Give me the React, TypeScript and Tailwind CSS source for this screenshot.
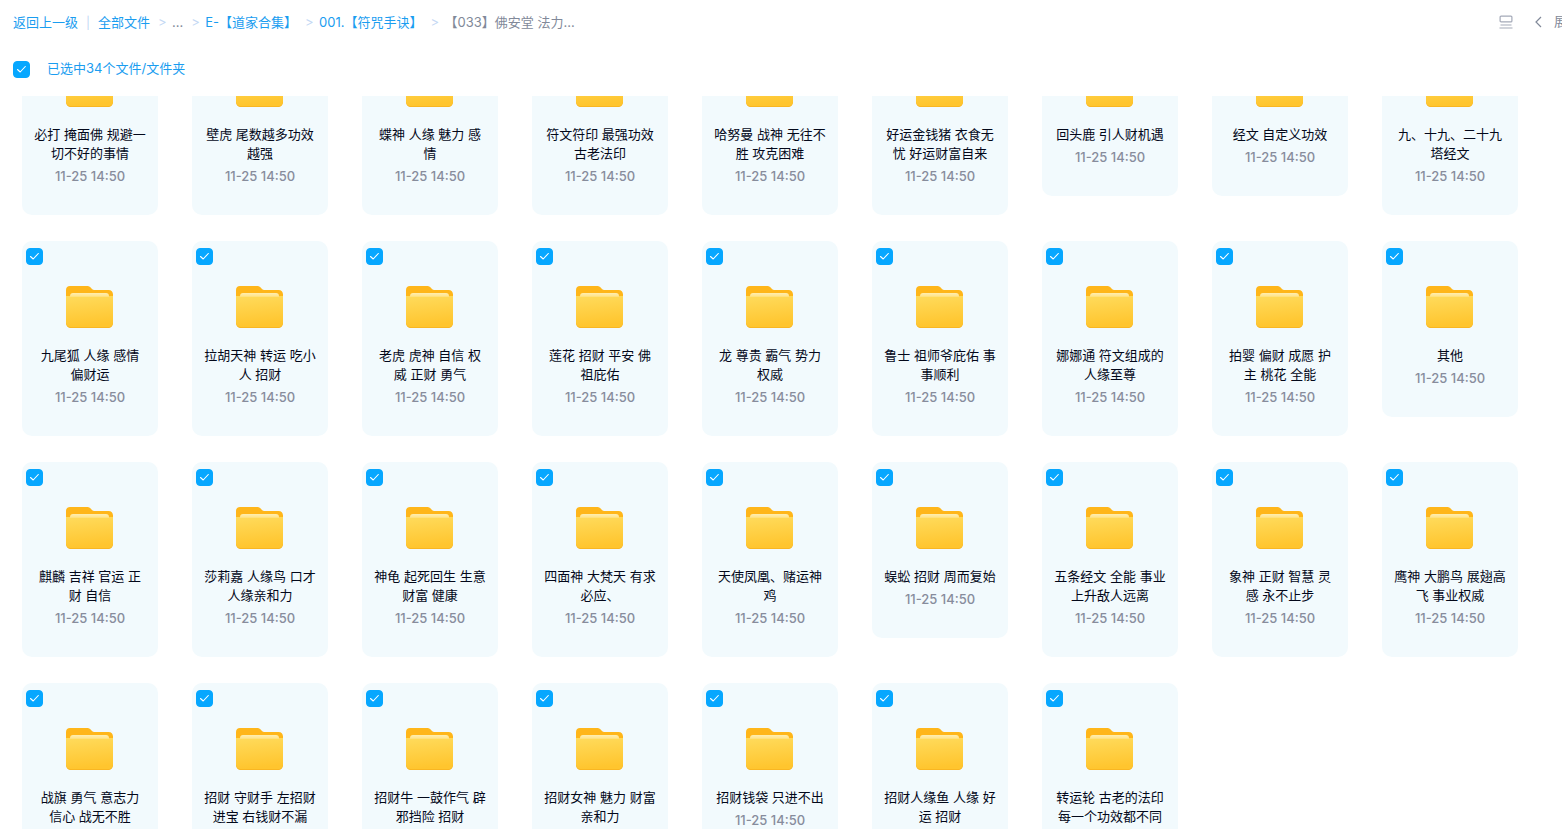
import React, { useLayoutEffect, useRef, useState } from 'react';

interface FolderItem {
    id: number;
    name: string;
    modifiedAt: string;
}

const folderNames = [
    '必打 掩面佛 规避一切不好的事情',
    '壁虎 尾数越多功效越强',
    '蝶神 人缘 魅力 感情',
    '符文符印 最强功效 古老法印',
    '哈努曼 战神 无往不胜 攻克困难',
    '好运金钱猪 衣食无忧 好运财富自来',
    '回头鹿 引人财机遇',
    '经文 自定义功效',
    '九、十九、二十九塔经文',
    '九尾狐 人缘 感情 偏财运',
    '拉胡天神 转运 吃小人 招财',
    '老虎 虎神 自信 权威 正财 勇气',
    '莲花 招财 平安 佛祖庇佑',
    '龙 尊贵 霸气 势力 权威',
    '鲁士 祖师爷庇佑 事事顺利',
    '娜娜通 符文组成的人缘至尊',
    '拍婴 偏财 成愿 护主 桃花 全能',
    '其他',
    '麒麟 吉祥 官运 正财 自信',
    '莎莉嘉 人缘鸟 口才 人缘亲和力',
    '神龟 起死回生 生意财富 健康',
    '四面神 大梵天 有求必应、',
    '天使凤凰、赌运神鸡',
    '蜈蚣 招财 周而复始',
    '五条经文 全能 事业上升敌人远离',
    '象神 正财 智慧 灵感 永不止步',
    '鹰神 大鹏鸟 展翅高飞 事业权威',
    '战旗 勇气 意志力 信心 战无不胜',
    '招财 守财手 左招财进宝 右钱财不漏',
    '招财牛 一鼓作气 辟邪挡险 招财',
    '招财女神 魅力 财富 亲和力',
    '招财钱袋 只进不出',
    '招财人缘鱼 人缘 好运 招财',
    '转运轮 古老的法印 每一个功效都不同',
];

const folders: FolderItem[] = folderNames.map((name, index) => ({
    id: index + 1,
    name,
    modifiedAt: '11-25 14:50',
}));

const INITIAL_SCROLL = 76;

const FolderGradients = () => (
    <svg width="0" height="0" className="absolute" aria-hidden="true">
        <defs>
            <linearGradient id="folder-front" x1="0" y1="0" x2="0.15" y2="1">
                <stop offset="0" stopColor="#ffdb5c" />
                <stop offset="1" stopColor="#ffc52e" />
            </linearGradient>
            <linearGradient id="folder-sheet" x1="0" y1="0" x2="0" y2="1">
                <stop offset="0" stopColor="#ffeeb0" />
                <stop offset="1" stopColor="#ffdf7a" />
            </linearGradient>
        </defs>
    </svg>
);

const FolderIcon = () => (
    <svg width="48" height="42" viewBox="0 0 48 42" aria-hidden="true">
        <path
            d="M0 4C0 1.6 1.6 0 4 0H21C22.6 0 23.6.5 24.6 1.5L26 2.9C26.8 3.7 27.6 4 28.8 4H42.5C45.4 4 47 5.8 47 8.5V38H0Z"
            fill="#ffb61a"
        />
        <path d="M4 12V10C4 8.3 5.2 7 7 7H40C41.8 7 43 8.3 43 10V12Z" fill="url(#folder-sheet)" />
        <path d="M0 10H47V37C47 40 45 42 42 42H5C2 42 0 40 0 37Z" fill="#f9b622" />
        <path d="M0 10H47V36C47 39 45 41 42 41H5C2 41 0 39 0 36Z" fill="url(#folder-front)" />
        <path d="M4 10H43V11H4Z" fill="#ffe79a" opacity="0.6" />
    </svg>
);

interface CheckboxProps {
    checked: boolean;
    onChange: () => void;
    label: string;
}

const Checkbox: React.FC<CheckboxProps> = ({ checked, onChange, label }) => (
    <span className="relative block w-[17px] h-[17px] shrink-0">
        <input
            type="checkbox"
            aria-label={label}
            checked={checked}
            onChange={onChange}
            className="block w-full h-full appearance-none rounded border border-[#d4d7de] bg-white checked:border-[#06a7ff] checked:bg-[#06a7ff] cursor-pointer"
        />
        {checked && (
            <svg className="absolute inset-0 pointer-events-none" width="17" height="17" viewBox="0 0 17 17" fill="none">
                <path d="M4.5 8.5L7.2 11L12.3 5.5" stroke="#fff" strokeWidth="1.1" strokeLinecap="round" strokeLinejoin="round" />
            </svg>
        )}
    </span>
);

const Separator = () => <span className="ml-2 mr-1.5 w-2 text-center text-[#c4d8f4]">&gt;</span>;

interface FolderCardProps {
    folder: FolderItem;
    selected: boolean;
    onToggle: (id: number) => void;
}

const FolderCard: React.FC<FolderCardProps> = ({ folder, selected, onToggle }) => (
    <li className={`relative flex flex-col items-center rounded-[10px] px-3 pt-[45px] pb-[29px] ${selected ? 'bg-[#f2fafd]' : 'bg-white'}`}>
        <div className="absolute left-1 top-[7px]">
            <Checkbox checked={selected} onChange={() => onToggle(folder.id)} label={folder.name} />
        </div>
        <FolderIcon />
        <a href="#" className="mt-[18px] w-full text-center leading-[19px] text-[#03081a]">
            {folder.name}
        </a>
        <span className="mt-[3px] font-medium leading-5 text-[#878c9c]">{folder.modifiedAt}</span>
    </li>
);

const App = () => {
    const [selected, setSelected] = useState<number[]>(folders.map((folder) => folder.id));
    const listRef = useRef<HTMLDivElement>(null);

    useLayoutEffect(() => {
        if (listRef.current) {
            listRef.current.scrollTop = INITIAL_SCROLL;
        }
    }, []);

    const handleToggle = (id: number) => {
        setSelected((prev) => (prev.includes(id) ? prev.filter((item) => item !== id) : [...prev, id]));
    };

    const allSelected = selected.length === folders.length;

    const handleToggleAll = () => {
        setSelected(allSelected ? [] : folders.map((folder) => folder.id));
    };

    return (
        <div className="flex h-screen flex-col overflow-hidden bg-white text-[13px] font-[Inter,'Noto_Sans_CJK_SC',sans-serif]">
            <FolderGradients />

            {/* Breadcrumb */}
            <header className="flex h-11 shrink-0 items-center justify-between overflow-hidden whitespace-nowrap pl-[13px]">
                <nav className="flex items-center pt-0.5 text-[#1a9df0]">
                    <a href="#">返回上一级</a>
                    <span className="mx-2 w-1 text-center text-xs text-[#c4d8f4]">|</span>
                    <a href="#">全部文件</a>
                    <Separator />
                    <span className="text-[#818999]">...</span>
                    <Separator />
                    <a href="#">E-【道家合集】</a>
                    <Separator />
                    <a href="#">001.【符咒手诀】</a>
                    <Separator />
                    <span className="text-[#818999]">【033】佛安堂 法力...</span>
                </nav>
                <div className="-mr-[18px] flex items-center text-[#818999]">
                    <button type="button" aria-label="切换视图" className="mr-[22px]">
                        <svg width="14" height="14" viewBox="0 0 14 14" fill="none" stroke="#a4a9b8" strokeWidth="1.2">
                            <rect x="1.1" y="1.1" width="11.8" height="5.8" rx="1" />
                            <path d="M1.5 10H12.5M.5 13H13.5" />
                        </svg>
                    </button>
                    <button type="button" className="flex items-center gap-3">
                        <svg width="7" height="12" viewBox="0 0 7 12" fill="none" stroke="#818999" strokeWidth="1.2">
                            <path d="M6 1L1 6L6 11" />
                        </svg>
                        展开
                    </button>
                </div>
            </header>

            {/* Selection bar */}
            <div className="flex h-[52px] shrink-0 items-center gap-[17px] pb-0.5 pl-[13px] text-[#1a9df0]">
                <Checkbox checked={allSelected} onChange={handleToggleAll} label="全选" />
                <span>已选中{selected.length}个文件/文件夹</span>
            </div>

            {/* Folder grid */}
            <div ref={listRef} className="flex-1 overflow-y-auto [scrollbar-width:none]">
                <ul className="grid grid-cols-[repeat(auto-fill,136px)] items-start gap-x-[34px] gap-y-[26px] pl-[22px]">
                    {folders.map((folder) => (
                        <FolderCard
                            key={folder.id}
                            folder={folder}
                            selected={selected.includes(folder.id)}
                            onToggle={handleToggle}
                        />
                    ))}
                </ul>
            </div>
        </div>
    );
};

export default App;
